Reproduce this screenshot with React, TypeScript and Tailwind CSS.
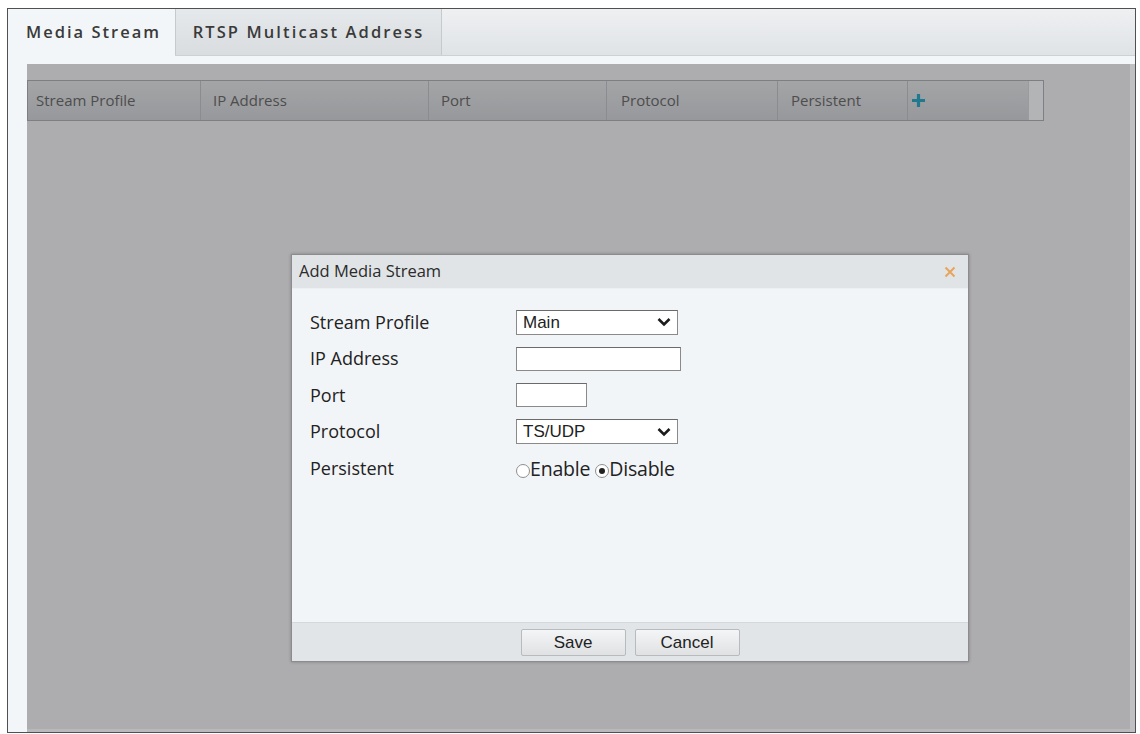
import React from "react";

const columns = [
  { label: "Stream Profile", width: "w-[173px]", pad: "pl-[8px]" },
  { label: "IP Address", width: "w-[228px]", pad: "pl-[12px]" },
  { label: "Port", width: "w-[178px]", pad: "pl-[12px]" },
  { label: "Protocol", width: "w-[171px]", pad: "pl-[14px]" },
  { label: "Persistent", width: "w-[130px]", pad: "pl-[13px]" },
];

function Chevron() {
  return (
    <svg width="14" height="10" viewBox="0 0 14 10" className="mr-[6px]">
      <path d="M1.5 2 L7 7.5 L12.5 2" fill="none" stroke="#1c1c1c" strokeWidth="2.6" />
    </svg>
  );
}

function SelectBox({ value }: { value: string }) {
  return (
    <div className="w-[162px] h-[25px] bg-white border border-[#8a8a8a] border-t-[#6a6a6a] flex items-center justify-between">
      <span className="pl-[6px] text-[17px] leading-none text-[#222] font-['Liberation_Sans',Arial,sans-serif]">{value}</span>
      <Chevron />
    </div>
  );
}

function TextBox({ width }: { width: string }) {
  return <div className={`${width} h-[24px] bg-white border border-[#8a8a8a] border-t-[#6a6a6a]`} />;
}

function Radio({ checked, label }: { checked: boolean; label: string }) {
  return (
    <span className="flex items-center">
      <span className="w-[14px] h-[14px] rounded-full border border-[#8f8f8f] bg-white flex items-center justify-center mt-[6px]">
        {checked && <span className="w-[6px] h-[6px] rounded-full bg-[#222]" />}
      </span>
      <span>{label}</span>
    </span>
  );
}

function FormRow({ label, children }: { label: string; children: React.ReactNode }) {
  return (
    <div className="flex items-center h-[36.5px]">
      <div className="w-[206px] text-[18px] text-[#222]">{label}</div>
      {children}
    </div>
  );
}

function AddStreamDialog() {
  return (
    <div className="absolute left-[264px] top-[190px] w-[678px] h-[408px] border border-[#8c8c8e] flex flex-col shadow-[0_0_3px_rgba(0,0,0,0.25)] font-['Open_Sans',sans-serif]">
      <div className="h-[34px] bg-[#e1e4e6] border-b border-[#edf0f2] flex items-center justify-between pl-[7px] pr-[12px]">
        <span className="text-[16.5px] text-[#2b2b2b]">Add Media Stream</span>
        <svg width="12" height="12" viewBox="0 0 12 12">
          <path d="M1.5 1.5 L10.5 10.5 M10.5 1.5 L1.5 10.5" stroke="#e6a45c" strokeWidth="2" />
        </svg>
      </div>
      <div className="flex-1 bg-[#f2f5f8] pt-[15px] pl-[18px]">
        <FormRow label="Stream Profile">
          <SelectBox value="Main" />
        </FormRow>
        <FormRow label="IP Address">
          <TextBox width="w-[165px]" />
        </FormRow>
        <FormRow label="Port">
          <TextBox width="w-[71px]" />
        </FormRow>
        <FormRow label="Protocol">
          <SelectBox value="TS/UDP" />
        </FormRow>
        <FormRow label="Persistent">
          <div className="flex items-center gap-[5px] text-[19.5px] text-[#222] tracking-[-0.2px]">
            <Radio checked={false} label="Enable" />
            <Radio checked label="Disable" />
          </div>
        </FormRow>
      </div>
      <div className="h-[39px] bg-[#e2e5e7] border-t border-[#d6d9db] flex items-center justify-center gap-[9px]">
        {["Save", "Cancel"].map((b) => (
          <button
            key={b}
            className="w-[105px] h-[27px] rounded-[2px] border border-[#b8bbbe] bg-gradient-to-b from-[#f4f5f6] to-[#dfe1e3] text-[17px] leading-none text-[#222] font-['Liberation_Sans',Arial,sans-serif]"
          >
            {b}
          </button>
        ))}
      </div>
    </div>
  );
}

export default function App() {
  return (
    <div className="w-[1140px] h-[734px] bg-white pt-[8px] pl-[7px]">
      <div className="w-[1129px] h-[725px] border border-[#505050] bg-[#f3f6f8] flex flex-col font-['Open_Sans',sans-serif]">
        {/* tab strip */}
        <div className="h-[47px] flex bg-gradient-to-b from-[#eef0f2] to-[#e0e3e6] border-b border-[#cdd1d4]">
          <div className="w-[167px] -mb-px bg-[#f3f6f8] flex items-center justify-center pl-[4px] text-[16.5px] font-semibold tracking-[2px] text-[#3a3a3a]">
            Media Stream
          </div>
          <div className="w-[267px] bg-gradient-to-b from-[#e6e9ec] to-[#d9dde0] border-x border-[#c6cacd] flex items-center justify-center text-[16.5px] font-semibold tracking-[2.1px] text-[#3a3a3a]">
            RTSP Multicast Address
          </div>
        </div>

        {/* content under the modal mask */}
        <div className="flex-1 pl-[19px] pt-[8px] flex">
          <div className="flex-1 flex flex-col">
            <div className="relative flex-1 bg-[#adacaf] pt-[16px]">
              <div className="w-[1017px] h-[41px] flex border border-[#7e7f82] bg-gradient-to-b from-[#a4a5a7] to-[#97989b] text-[15px] text-[#4d4d4d]">
                {columns.map((c) => (
                  <div key={c.label} className={`${c.width} ${c.pad} h-full flex items-center border-r border-[#8b8c8f]`}>
                    {c.label}
                  </div>
                ))}
                <div className="flex-1 h-full flex items-center pl-[3px]">
                  <svg width="15" height="15" viewBox="0 0 15 15">
                    <path d="M7.5 1 V14 M1 7.5 H14" stroke="#1f7a90" strokeWidth="3.2" />
                  </svg>
                </div>
                <div className="w-[15px] h-full bg-[#b3b4b6] border-l border-[#9a9b9d]" />
              </div>
              <AddStreamDialog />
            </div>
            <div className="h-[3px] bg-[#b9b9bb]" />
          </div>
          <div className="w-[5px] bg-[#c0c0c2]" />
        </div>
      </div>
    </div>
  );
}
